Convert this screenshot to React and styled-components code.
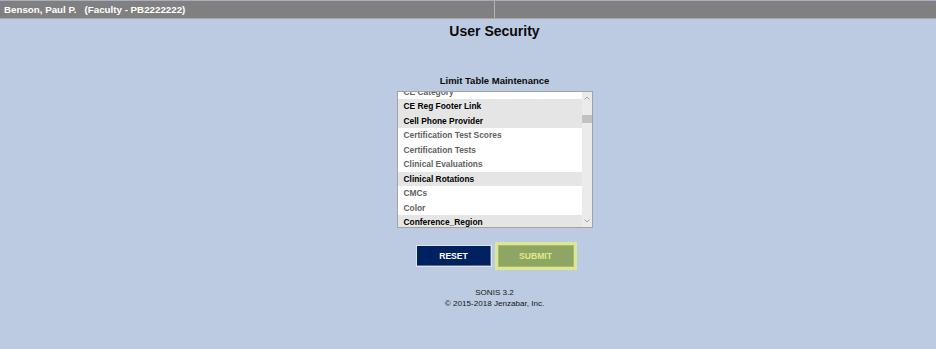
import React from "react";
import styled, { createGlobalStyle } from "styled-components";

const Global = createGlobalStyle`
  html, body { margin: 0; padding: 0; background: #bccbe2; }
  body { font-family: "Liberation Sans", Arial, sans-serif; min-height: 100vh; }
  * { box-sizing: border-box; }
`;

const Page = styled.div`
  width: 936px;
  min-height: 349px;
  overflow: hidden;
  background: #bccbe2;
`;

const TopBar = styled.div`
  display: flex;
  height: 19px;
  background: #808080;
  border-top: 1px solid #a6aebe;
  border-bottom: 1px solid #a8a8a8;
`;

const UserCell = styled.div`
  width: 495px;
  flex: none;
  border-right: 1px solid #b4b4b4;
  padding-left: 4px;
  color: #ffffff;
  font-size: 9.75px;
  font-weight: bold;
  line-height: 17px;
  white-space: nowrap;
`;

const FillCell = styled.div`
  flex: 1;
`;

const Main = styled.div`
  padding-left: 53px;
  display: flex;
  flex-direction: column;
  align-items: center;
  color: #000;
`;

const Title = styled.h1`
  margin: 4px 0 0;
  font-size: 14px;
  line-height: 16px;
  font-weight: bold;
  color: #0a0a0a;
`;

const SubTitle = styled.div`
  margin-top: 36px;
  font-size: 9.5px;
  line-height: 12px;
  font-weight: bold;
  color: #0a0a0a;
`;

const ListBox = styled.div`
  margin-top: 4px;
  width: 196px;
  height: 137px;
  border: 1px solid #a3a3a3;
  background: #ffffff;
  display: flex;
`;

const Items = styled.div`
  flex: 1;
  overflow: hidden;
`;

const ItemsInner = styled.div`
  margin-top: -7.5px;
`;

const Item = styled.div`
  height: 14.5px;
  line-height: 15px;
  padding-left: 6px;
  font-size: 8.4px;
  font-weight: bold;
  white-space: nowrap;
  background: ${(p) => (p.$selected ? "#e5e5e5" : "#ffffff")};
  color: ${(p) => (p.$selected ? "#000000" : "#626262")};
`;

const ScrollBar = styled.div`
  width: 10px;
  flex: none;
  background: #ebebeb;
  display: flex;
  flex-direction: column;
  align-items: stretch;
`;

const Arrow = styled.div`
  height: 12px;
  display: flex;
  align-items: center;
  justify-content: center;
`;

const Thumb = styled.div`
  margin: 11px 0 0;
  height: 8px;
  background: #c2c2c2;
`;

const Spacer = styled.div`
  flex: 1;
`;

const ButtonRow = styled.div`
  margin-top: 17px;
  display: flex;
  gap: 6px;
`;

const Button = styled.button`
  width: 76px;
  height: 22px;
  padding: 0;
  font-family: "Liberation Sans", Arial, sans-serif;
  font-size: 8.6px;
  font-weight: bold;
  cursor: pointer;
  background: ${(p) => (p.$primary ? "#8ea664" : "#00215f")};
  color: ${(p) => (p.$primary ? "#e3e98b" : "#ffffff")};
  border: 1px solid ${(p) => (p.$primary ? "#a7b977" : "#dfe3ec")};
  box-shadow: ${(p) => (p.$primary ? "none" : "inset -1px -1px 0 #5f6f90")};
  outline: ${(p) => (p.$primary ? "3px solid #dce88f" : "none")};
`;

const Footer = styled.div`
  margin-top: 20px;
  font-size: 8.1px;
  line-height: 11px;
  text-align: center;
  color: #161616;
`;

const items = [
  ["CE Category", false],
  ["CE Reg Footer Link", true],
  ["Cell Phone Provider", true],
  ["Certification Test Scores", false],
  ["Certification Tests", false],
  ["Clinical Evaluations", false],
  ["Clinical Rotations", true],
  ["CMCs", false],
  ["Color", false],
  ["Conference_Region", true],
];

const Chevron = ({ up }) => (
  <svg width="6" height="4" viewBox="0 0 6 4">
    <path
      d={up ? "M0.5 3.5 L3 1 L5.5 3.5" : "M0.5 0.5 L3 3 L5.5 0.5"}
      fill="none"
      stroke="#a3a3a3"
      strokeWidth="1"
    />
  </svg>
);

export default function App() {
  return (
    <Page>
      <Global />
      <TopBar>
        <UserCell>{"Benson, Paul P.\u00a0\u00a0\u00a0(Faculty - PB2222222)"}</UserCell>
        <FillCell />
      </TopBar>
      <Main>
        <Title>User Security</Title>
        <SubTitle>Limit Table Maintenance</SubTitle>
        <ListBox>
          <Items>
            <ItemsInner>
              {items.map(([label, sel]) => (
                <Item key={label} $selected={sel}>
                  {label}
                </Item>
              ))}
            </ItemsInner>
          </Items>
          <ScrollBar>
            <Arrow>
              <Chevron up />
            </Arrow>
            <Thumb />
            <Spacer />
            <Arrow>
              <Chevron />
            </Arrow>
          </ScrollBar>
        </ListBox>
        <ButtonRow>
          <Button>RESET</Button>
          <Button $primary>SUBMIT</Button>
        </ButtonRow>
        <Footer>
          SONIS 3.2
          <br />© 2015-2018 Jenzabar, Inc.
        </Footer>
      </Main>
    </Page>
  );
}
